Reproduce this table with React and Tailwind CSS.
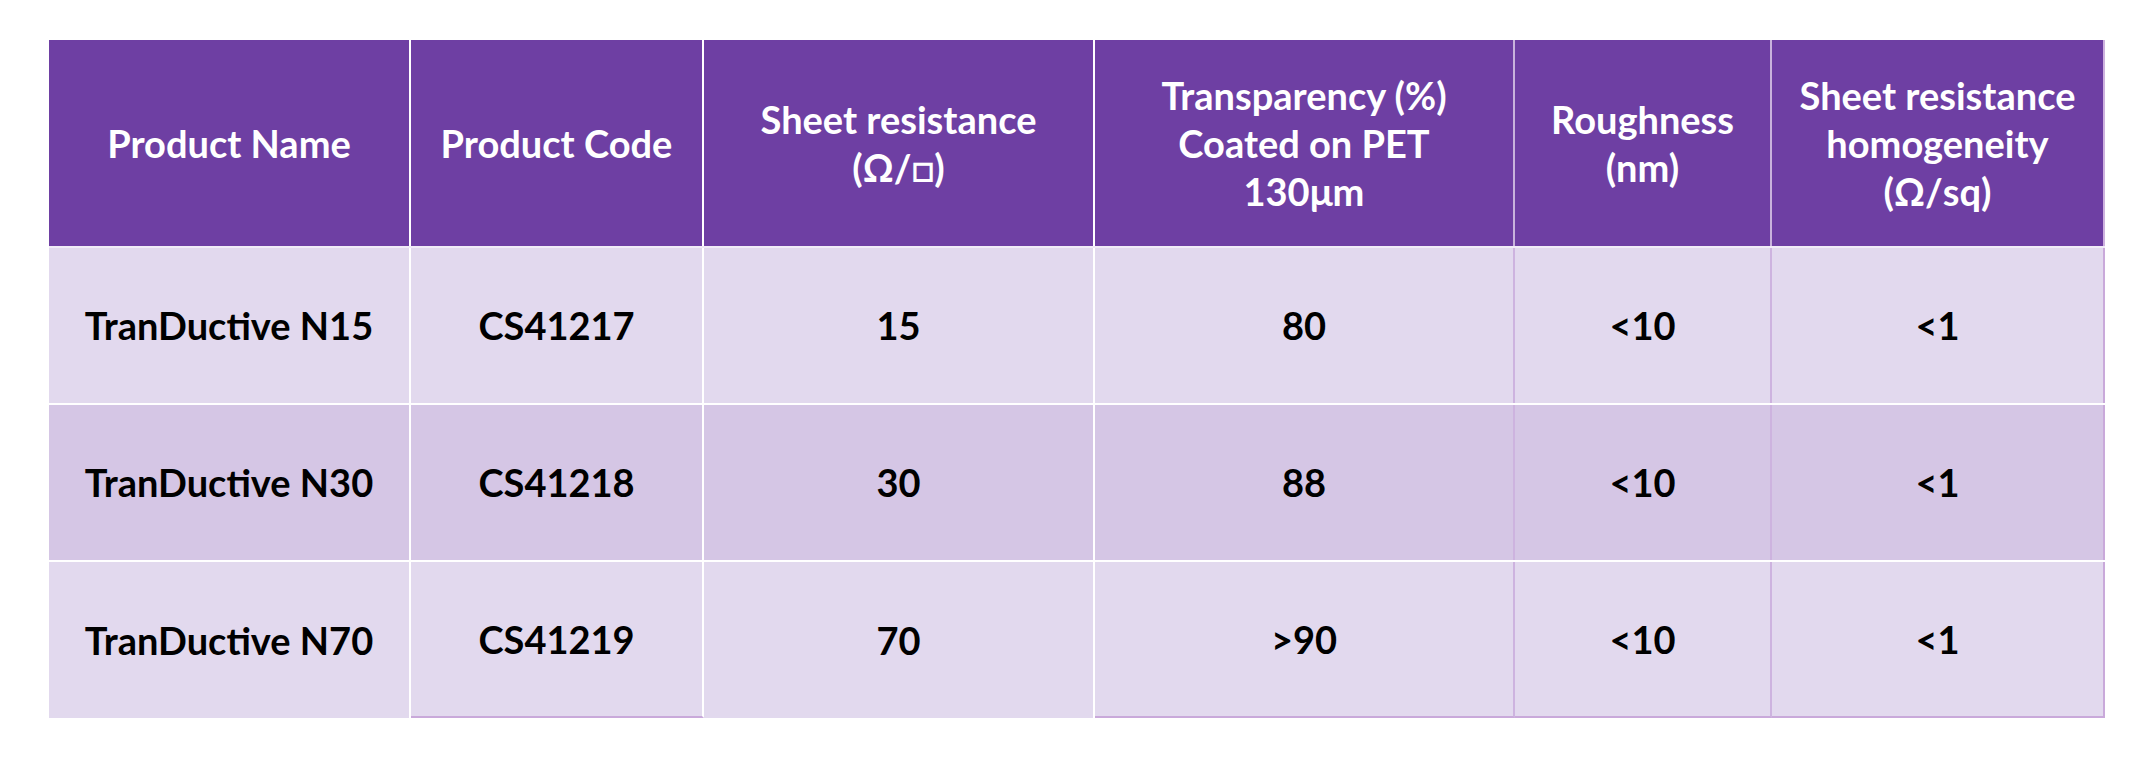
const headers = [
  ["Product Name"],
  ["Product Code"],
  ["Sheet resistance", "(Ω/□)"],
  ["Transparency (%)", "Coated on PET", "130μm"],
  ["Roughness", "(nm)"],
  ["Sheet resistance", "homogeneity", "(Ω/sq)"],
];

const rows = [
  ["TranDuctive N15", "CS41217", "15", "80", "<10", "<1"],
  ["TranDuctive N30", "CS41218", "30", "88", "<10", "<1"],
  ["TranDuctive N70", "CS41219", "70", ">90", "<10", "<1"],
];

// column borders: first separators are white, the last ones light purple
const headCell = [
  "border-r-2 border-white",
  "border-r-2 border-white",
  "border-r-2 border-white",
  "border-r-2 border-[#c9b3dc]",
  "border-r-2 border-[#c9b3dc]",
  "border-r-2 border-[#cdb1de]",
];

const bodyCell = [
  "border-r-2 border-white",
  "border-r-2 border-white",
  "border-r-2 border-white",
  "border-r-2 border-[#cdb3df]",
  "border-r-2 border-[#cdb3df]",
  "border-r-2 border-[#c9a9da]",
];

// last row: purple bottom edge under every column but the first and third
const lastRowBottom = ["", "border-b-2 border-b-[#c9a9da]", "", "border-b-2 border-b-[#c9a9da]", "border-b-2 border-b-[#c9a9da]", "border-b-2 border-b-[#c9a9da]"];

export default function App() {
  return (
    <div className="w-[2152px] h-[762px] bg-white pt-[40px] pl-[49px] font-['Lato','Open_Sans',sans-serif]">
      <div className="w-[2056px] flex flex-col">
        <div className="grid grid-cols-[362px_293px_391px_420px_257px_333px] h-[208px] bg-[#6e3fa3] border-b-2 border-[#f1ecf7]">
          {headers.map((lines, i) => (
            <div
              key={i}
              className={`flex flex-col items-center justify-center text-white font-bold text-[38px] leading-[48px] text-center ${headCell[i]}`}
            >
              {lines.map((l) => (
                <span key={l}>{l}</span>
              ))}
            </div>
          ))}
        </div>
        {rows.map((row, r) => (
          <div
            key={r}
            className={`grid grid-cols-[362px_293px_391px_420px_257px_333px] ${
              r === 1 ? "bg-[#d5c6e5]" : "bg-[#e2d9ee]"
            } ${r < 2 ? "h-[157px] border-b-2 border-white" : "h-[156px]"}`}
          >
            {row.map((v, i) => (
              <div
                key={i}
                className={`flex items-center justify-center text-black font-bold text-[38px] ${bodyCell[i]} ${
                  r === 2 ? lastRowBottom[i] : ""
                }`}
              >
                {v}
              </div>
            ))}
          </div>
        ))}
      </div>
    </div>
  );
}
